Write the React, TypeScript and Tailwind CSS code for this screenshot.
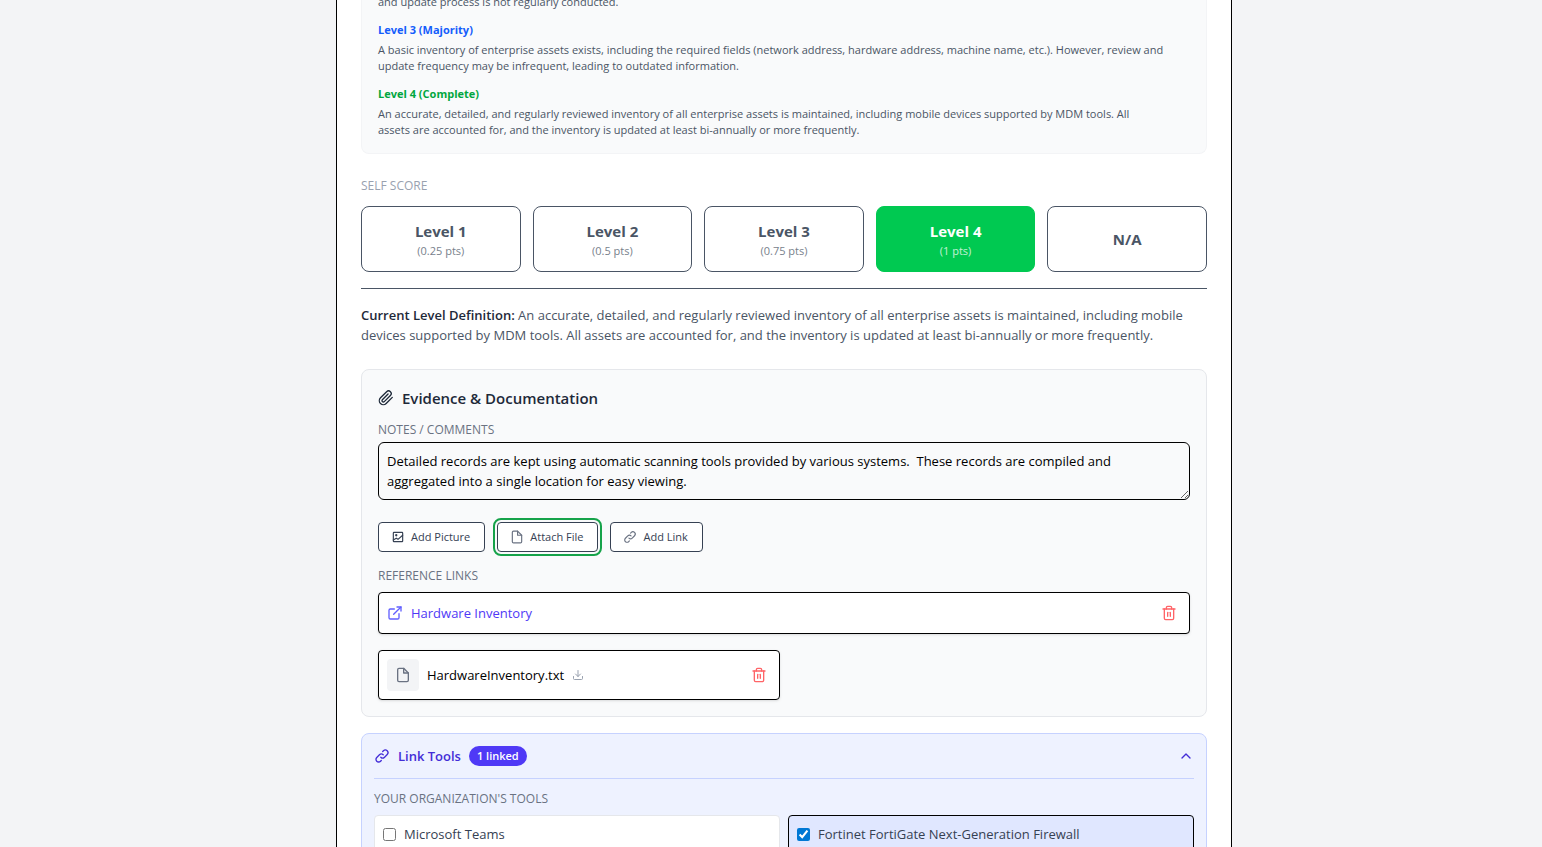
import { useState } from 'react';
import {
  FiChevronDown,
  FiChevronUp,
  FiDownload,
  FiExternalLink,
  FiFile,
  FiPaperclip,
  FiTrash2,
} from 'react-icons/fi';
import { HiOutlineLink } from 'react-icons/hi';

interface ScoreOption {
  id: string;
  label: string;
  points?: string;
}

interface Tool {
  id: string;
  name: string;
}

const scoreOptions: ScoreOption[] = [
  { id: 'l1', label: 'Level 1', points: '(0.25 pts)' },
  { id: 'l2', label: 'Level 2', points: '(0.5 pts)' },
  { id: 'l3', label: 'Level 3', points: '(0.75 pts)' },
  { id: 'l4', label: 'Level 4', points: '(1 pts)' },
  { id: 'na', label: 'N/A' },
];

const tools: Tool[] = [
  { id: 'teams', name: 'Microsoft Teams' },
  { id: 'fortigate', name: 'Fortinet FortiGate Next-Generation Firewall' },
];

const actionClass =
  'flex items-center gap-1.5 rounded border border-gray-700 bg-white py-1.5 pr-3.5 pl-3 text-[11px] leading-4 text-gray-700 hover:bg-gray-50';

function PictureIcon({ className }: { className?: string }) {
  return (
    <svg
      className={className}
      viewBox="0 0 24 24"
      fill="none"
      stroke="currentColor"
      strokeWidth={2}
      strokeLinecap="round"
      strokeLinejoin="round"
      aria-hidden="true"
    >
      <rect x="4" y="4" width="16" height="16" rx="1" />
      <circle cx="9" cy="9" r="1" />
      <path d="M4 17l5-3 3 2 8-7" />
    </svg>
  );
}

function LevelDefinitions() {
  return (
    <div className="-mt-1.5 space-y-3 rounded-b-lg border border-t-0 border-gray-100 bg-gray-50 px-4 pb-[15px] text-[11px] leading-4 text-gray-600">
      <p>and update process is not regularly conducted.</p>
      <div>
        <h4 className="mb-1 font-bold text-blue-600">Level 3 (Majority)</h4>
        <p>
          A basic inventory of enterprise assets exists, including the required fields (network address, hardware
          address, machine name, etc.). However, review and update frequency may be infrequent, leading to outdated
          information.
        </p>
      </div>
      <div>
        <h4 className="mb-1 font-bold text-green-600">Level 4 (Complete)</h4>
        <p className="pr-8">
          An accurate, detailed, and regularly reviewed inventory of all enterprise assets is maintained, including
          mobile devices supported by MDM tools. All assets are accounted for, and the inventory is updated at least
          bi-annually or more frequently.
        </p>
      </div>
    </div>
  );
}

function SelfScore() {
  const [selected, setSelected] = useState('l4');

  return (
    <section className="mt-6">
      <h3 className="mb-3 text-xs font-medium leading-4 text-gray-400 uppercase">Self Score</h3>
      <div className="grid grid-cols-5 gap-3">
        {scoreOptions.map((option) => {
          const active = option.id === selected;
          return (
            <button
              key={option.id}
              type="button"
              aria-pressed={active}
              onClick={() => setSelected(option.id)}
              className={`flex flex-col items-center justify-center rounded-lg border p-3 ${
                active ? 'border-green-500 bg-green-500 text-white' : 'border-gray-600 bg-white text-gray-600'
              }`}
            >
              <span className="text-[15px] font-bold leading-6">{option.label}</span>
              {option.points && <span className="text-[11px] leading-4 opacity-75">{option.points}</span>}
            </button>
          );
        })}
      </div>
      <p className="mt-4 border-t border-gray-600 pt-4 text-[13px] leading-5 text-gray-600">
        <strong className="font-semibold text-gray-800">Current Level Definition:</strong> An accurate, detailed, and
        regularly reviewed inventory of all enterprise assets is maintained, including mobile devices supported by MDM
        tools. All assets are accounted for, and the inventory is updated at least bi-annually or more frequently.
      </p>
    </section>
  );
}

function DeleteButton({ label }: { label: string }) {
  return (
    <button type="button" aria-label={label} className="rounded p-1 text-red-400 hover:text-red-600">
      <FiTrash2 className="size-4" />
    </button>
  );
}

function Evidence() {
  const [notes, setNotes] = useState(
    'Detailed records are kept using automatic scanning tools provided by various systems.  These records are compiled and aggregated into a single location for easy viewing.'
  );

  return (
    <section className="mt-6 rounded-lg border border-gray-200 bg-gray-50 p-4">
      <h3 className="mb-3 flex items-center gap-2 text-[15px] font-semibold leading-6 text-gray-800">
        <FiPaperclip className="size-4" />
        Evidence &amp; Documentation
      </h3>
      <label htmlFor="notes" className="mb-1 block text-xs font-medium leading-4 text-gray-500 uppercase">
        Notes / Comments
      </label>
      <textarea
        id="notes"
        rows={2}
        value={notes}
        onChange={(e) => setNotes(e.target.value)}
        className="block w-full rounded-md border border-black p-2 text-[13px] leading-5 text-black"
      />
      <div className="mt-[22px] flex gap-3">
        <button type="button" className={actionClass}>
          <PictureIcon className="size-3.5" />
          Add Picture
        </button>
        <button type="button" className={`${actionClass} outline-2 outline-offset-2 outline-[#16a34a]`}>
          <FiFile className="size-3.5 text-gray-500" />
          Attach File
        </button>
        <button type="button" className={actionClass}>
          <HiOutlineLink className="size-3.5 text-gray-500" />
          Add Link
        </button>
      </div>
      <h4 className="mt-4 mb-2 text-xs font-medium leading-4 text-gray-500 uppercase">Reference Links</h4>
      <div className="flex items-center justify-between rounded border border-black bg-white p-2 shadow-sm">
        <a href="#hardware-inventory" className="flex items-center gap-2 text-[13px] leading-5 text-indigo-600">
          <FiExternalLink className="size-4 text-indigo-500" />
          Hardware Inventory
        </a>
        <DeleteButton label="Remove link" />
      </div>
      <div className="mt-4 grid grid-cols-2 gap-2">
        <div className="flex items-center justify-between rounded border border-black bg-white p-2 shadow-sm">
          <a href="#hardware-inventory-file" className="flex items-center gap-2 text-[13px] leading-5 text-black">
            <span className="flex size-8 items-center justify-center rounded bg-gray-100">
              <FiFile className="size-4 text-gray-500" />
            </span>
            HardwareInventory.txt
            <FiDownload className="size-3 text-gray-400" />
          </a>
          <DeleteButton label="Remove file" />
        </div>
      </div>
    </section>
  );
}

function LinkTools() {
  const [open, setOpen] = useState(true);
  const [linked, setLinked] = useState<Record<string, boolean>>({ fortigate: true });

  const count = Object.values(linked).filter(Boolean).length;

  return (
    <section className="mt-4 rounded-lg border border-indigo-200 bg-indigo-50 p-3">
      <button
        type="button"
        aria-expanded={open}
        onClick={() => setOpen(!open)}
        className="flex w-full items-center justify-between text-indigo-700"
      >
        <span className="flex items-center gap-2 text-[13px] font-semibold leading-5">
          <HiOutlineLink className="size-4" />
          Link Tools
          <span className="rounded-full bg-indigo-600 px-2 py-0.5 text-[11px] font-semibold leading-4 text-white">
            {count} linked
          </span>
        </span>
        {open ? <FiChevronUp className="size-4" /> : <FiChevronDown className="size-4" />}
      </button>
      {open && (
        <div className="mt-3 border-t border-indigo-200 pt-3">
          <h4 className="mb-2 text-xs font-medium leading-4 text-gray-500 uppercase">
            Your Organization's Tools
          </h4>
          <div className="grid grid-cols-2 gap-2">
            {tools.map((tool) => {
              const checked = !!linked[tool.id];
              return (
                <label
                  key={tool.id}
                  htmlFor={tool.id}
                  className={`flex cursor-pointer items-center gap-2 rounded border p-2 text-[13px] leading-5 text-gray-700 ${
                    checked ? 'border-black bg-indigo-100' : 'border-gray-200 bg-white'
                  }`}
                >
                  <input
                    id={tool.id}
                    type="checkbox"
                    checked={checked}
                    onChange={() => setLinked((prev) => ({ ...prev, [tool.id]: !prev[tool.id] }))}
                    className="accent-[#0078d4]"
                  />
                  {tool.name}
                </label>
              );
            })}
          </div>
        </div>
      )}
    </section>
  );
}

export default function App() {
  return (
    <div className="h-screen overflow-hidden bg-gray-100 pl-[26px] font-['Open_Sans','Noto_Sans',sans-serif]">
      <main className="mx-auto min-h-full max-w-4xl border-x border-black bg-white px-6">
        <LevelDefinitions />
        <SelfScore />
        <Evidence />
        <LinkTools />
      </main>
    </div>
  );
}
